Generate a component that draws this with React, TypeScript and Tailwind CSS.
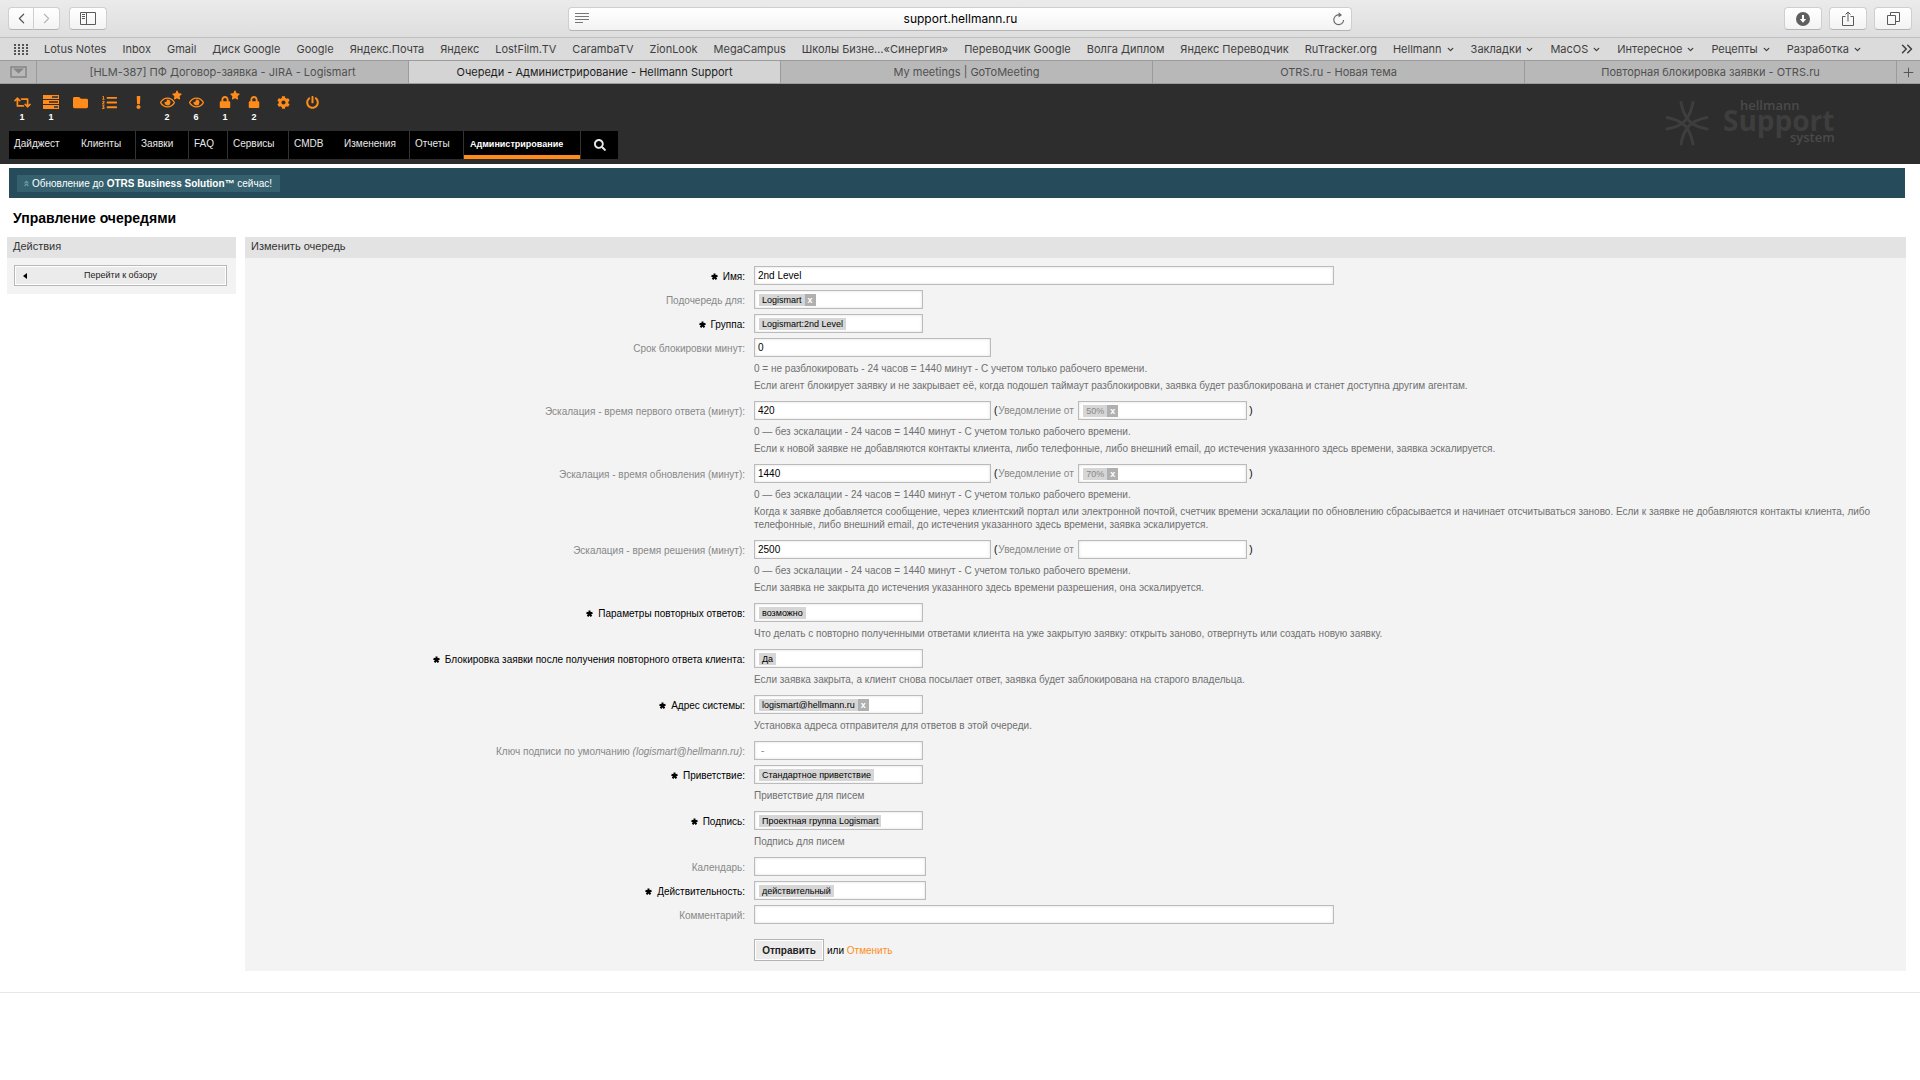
import React from "react";
import { ChevronDown, ChevronLeft, ChevronRight, ChevronsRight, Plus } from "lucide-react";
import {
  FaAngleDoubleUp,
  FaCog,
  FaExclamation,
  FaFolder,
  FaListOl,
  FaLock,
  FaPowerOff,
  FaRegEye,
  FaRetweet,
  FaSearch,
  FaStar,
} from "react-icons/fa";

/* ---------- Browser chrome ---------- */

const chromeButton =
  "flex h-[23px] items-center justify-center rounded border border-[#cfcfcf] border-b-[#b4b4b4] bg-gradient-to-b from-white to-[#f3f3f3] text-[#5a5a5a]";

function Toolbar() {
  return (
    <div className="grid h-[38px] grid-cols-[5fr_7fr_5fr] items-center border-b border-[#c0c0c0] bg-gradient-to-b from-[#ebebeb] to-[#dedede] px-2">
      <div className="flex">
        <button type="button" aria-label="Назад" className={chromeButton + " w-[26px] rounded-r-none"}>
          <ChevronLeft size={17} strokeWidth={1.75} />
        </button>
        <button type="button" aria-label="Вперёд" className={chromeButton + " w-[26px] rounded-l-none border-l-0"}>
          <ChevronRight size={17} strokeWidth={1.5} color="#b5b5b5" />
        </button>
        <button type="button" aria-label="Боковая панель" className={chromeButton + " ml-[9px] w-[38px]"}>
          <svg width="16" height="13" viewBox="0 0 16 13" fill="none" stroke="currentColor">
            <path d="M.5.5h15v12H.5zM6.5.5v12M2 2.5h3M2 4.5h3M2 6.5h3" />
          </svg>
        </button>
      </div>
      <div className="flex h-6 items-center rounded border border-[#cfcfcf] border-b-[#b4b4b4] bg-gradient-to-b from-white to-[#f3f3f3] px-[6px]">
        <svg width="14" height="11" viewBox="0 0 14 11" stroke="#777" aria-hidden="true">
          <path d="M0 .5h14M0 3.5h14M0 6.5h14M0 9.5h8" />
        </svg>
        <input
          aria-label="Адрес"
          defaultValue="support.hellmann.ru"
          className="min-w-0 flex-1 bg-transparent text-center text-xs text-black outline-none"
        />
        <button type="button" aria-label="Обновить" className="text-[#6b6b6b]">
          <svg width="13" height="14" viewBox="0 0 13 14" fill="none" stroke="currentColor" strokeWidth="1.2">
            <path d="M7 2.9A4.9 4.9 0 1 0 11.6 8" />
            <path d="M6.6.2 10 2.9 6.6 5.6z" fill="currentColor" stroke="none" />
          </svg>
        </button>
      </div>
      <div className="flex justify-end gap-[7px]">
        <button type="button" aria-label="Загрузки" className={chromeButton + " w-[38px]"}>
          <svg width="14" height="14" viewBox="0 0 14 14">
            <circle cx="7" cy="7" r="7" fill="#5f5f5f" />
            <path d="M6 3h2v4h2.2L7 10.8 3.8 7H6z" fill="#fff" />
          </svg>
        </button>
        <button type="button" aria-label="Поделиться" className={chromeButton + " w-[38px]"}>
          <svg width="12" height="16" viewBox="0 0 12 16" fill="none" stroke="currentColor">
            <path d="M3.5 5.5h-3v9h11v-9h-3M6 10.500V1M3.500 3.500 6 1l2.500 2.500" />
          </svg>
        </button>
        <button type="button" aria-label="Все вкладки" className={chromeButton + " w-[38px]"}>
          <svg width="13" height="13" viewBox="0 0 13 13" fill="none" stroke="currentColor">
            <path d="M.5 3.500h8v9h-8zM3.500 3.500v-3h9v9h-4" />
          </svg>
        </button>
      </div>
    </div>
  );
}

const bookmarks: { name: string; menu?: boolean }[] = [
  { name: "Lotus Notes" },
  { name: "Inbox" },
  { name: "Gmail" },
  { name: "Диск Google" },
  { name: "Google" },
  { name: "Яндекс.Почта" },
  { name: "Яндекс" },
  { name: "LostFilm.TV" },
  { name: "CarambaTV" },
  { name: "ZionLook" },
  { name: "MegaCampus" },
  { name: "Школы Бизне…«Синергия»" },
  { name: "Переводчик Google" },
  { name: "Волга Диплом" },
  { name: "Яндекс Переводчик" },
  { name: "RuTracker.org" },
  { name: "Hellmann", menu: true },
  { name: "Закладки", menu: true },
  { name: "MacOS", menu: true },
  { name: "Интересное", menu: true },
  { name: "Рецепты", menu: true },
  { name: "Разработка", menu: true },
];

function Bookmarks() {
  return (
    <nav aria-label="Закладки" className="flex h-[22px] items-center gap-4 bg-[#dbdbdb] pr-1 pl-[14px] text-[11px] text-[#3f3f3f]">
      <svg width="14" height="11" viewBox="0 0 14 11" fill="#555" aria-hidden="true">
        {[0, 4, 8, 12].map((x) => [0, 3, 6, 9].map((y) => <rect key={x + "-" + y} x={x} y={y} width="2" height="2" />))}
      </svg>
      {bookmarks.map((b) =>
        b.menu ? (
          <button key={b.name} type="button" className="flex items-center gap-1 whitespace-nowrap">
            {b.name}
            <ChevronDown size={9} strokeWidth={3.5} />
          </button>
        ) : (
          <a key={b.name} href="#" className="whitespace-nowrap">
            {b.name}
          </a>
        ),
      )}
      <button type="button" aria-label="Ещё закладки" className="ml-auto">
        <ChevronsRight size={18} strokeWidth={2} />
      </button>
    </nav>
  );
}

const tabs = [
  "[HLM-387] ПФ Договор-заявка - JIRA - Logismart",
  "Очереди - Администрирование - Hellmann Support",
  "My meetings | GoToMeeting",
  "OTRS.ru - Новая тема",
  "Повторная блокировка заявки - OTRS.ru",
];

function Tabs() {
  return (
    <div className="flex h-6 border-y border-[#9b9b9b] bg-[#b8b8b8] text-[11px] text-[#505050]">
      <button type="button" aria-label="Закреплённая вкладка" className="flex w-[37px] items-center justify-center border-r border-[#9b9b9b]">
        <svg width="17" height="12" viewBox="0 0 17 12" fill="none" stroke="#858585" strokeWidth="1.5">
          <path d="M1 1h15v10H1z" />
          <path d="M3 2.500h11L8.500 7.500z" fill="#858585" stroke="none" />
        </svg>
      </button>
      {tabs.map((t, i) => (
        <button
          key={t}
          type="button"
          className={
            "flex-1 border-r border-[#9b9b9b] " + (i === 1 ? "bg-[#d4d4d4] text-[#1c1c1c]" : "")
          }
        >
          {t}
        </button>
      ))}
      <button type="button" aria-label="Новая вкладка" className="flex w-[23px] items-center justify-center">
        <Plus size={15} strokeWidth={1.5} />
      </button>
    </div>
  );
}

/* ---------- Application header ---------- */

function TasksIcon() {
  return (
    <svg width="16" height="14" viewBox="0 0 16 14" fill="currentColor">
      <path
        fillRule="evenodd"
        d="M0 0h16v4H0zM9 1.300v1.400h6V1.300zM0 5h16v4H0zM6 6.300v1.400h9V6.300zM0 10h16v4H0zM11 11.300v1.400h4v-1.400z"
      />
    </svg>
  );
}

const tools: { label: string; icon: React.ReactNode; count?: number; star?: boolean }[] = [
  { label: "Автоответы", icon: <FaRetweet size={17} />, count: 1 },
  { label: "Задачи", icon: <TasksIcon />, count: 1 },
  { label: "Папка", icon: <FaFolder size={15} /> },
  { label: "Очереди", icon: <FaListOl size={15} /> },
  { label: "Эскалации", icon: <FaExclamation size={13} /> },
  { label: "Новые наблюдаемые", icon: <FaRegEye size={15} />, count: 2, star: true },
  { label: "Наблюдаемые", icon: <FaRegEye size={15} />, count: 6 },
  { label: "Новые заблокированные", icon: <FaLock size={12} />, count: 1, star: true },
  { label: "Заблокированные", icon: <FaLock size={12} />, count: 2 },
  { label: "Настройки", icon: <FaCog size={13} /> },
  { label: "Выход", icon: <FaPowerOff size={13} /> },
];

const navItems: { name: string; className: string }[] = [
  { name: "Дайджест", className: "w-[67px]" },
  { name: "Клиенты", className: "w-[60px] border-r" },
  { name: "Заявки", className: "w-[53px] border-r" },
  { name: "FAQ", className: "w-[39px] border-r" },
  { name: "Сервисы", className: "w-[61px] border-r" },
  { name: "CMDB", className: "w-[50px]" },
  { name: "Изменения", className: "w-[71px] border-r" },
  { name: "Отчеты", className: "w-[54px] border-r" },
];

function Logo() {
  return (
    <svg width="180" height="56" viewBox="0 0 180 56" role="img" aria-label="Hellmann Support System" className="font-['Open_Sans',sans-serif]">
      <g fill="none" stroke="#3e3e3e" strokeWidth="3" strokeLinecap="round">
        <path d="M17 6.500C20 22 26 30 43 33" />
        <path d="M29 6.500C26 22 20 30 3 33" />
        <path d="M17 48C20 32.500 26 24.500 43 21.500" />
        <path d="M29 48C26 32.500 20 24.500 3 21.500" />
      </g>
      <text x="59" y="35" fontSize="28" fontWeight="700" fill="#3e3e3e">
        Support
      </text>
      <text x="76" y="14" fontSize="13" fontWeight="600" fill="#4a4a4a">
        hellmann
      </text>
      <text x="126" y="46" fontSize="13" fontWeight="600" fill="#4a4a4a">
        system
      </text>
    </svg>
  );
}

function Header() {
  return (
    <header className="flex justify-between bg-[#2d2d2d] pr-[76px] pl-[9px]">
      <div className="pb-[5px]">
        <ul className="flex h-[47px] pt-[10px]">
          {tools.map((t) => (
            <li key={t.label} className="w-[29px]">
              <a href="#" aria-label={t.label} className="relative flex w-[26px] flex-col items-center text-[#ff8c1a]">
                <span className="flex h-4 items-center">{t.icon}</span>
                {t.star && <FaStar size={10} className="absolute -top-1 -right-[2px]" />}
                {t.count !== undefined && (
                  <span className="text-[9px] leading-[14px] font-bold text-white">{t.count}</span>
                )}
              </a>
            </li>
          ))}
        </ul>
        <nav aria-label="Главное меню" className="flex h-7 bg-black text-[10px] text-[#e8e8e8]">
          {navItems.map((n) => (
            <a key={n.name} href="#" className={"border-[#333] pt-[5px] pl-[5px] leading-4 " + n.className}>
              {n.name}
            </a>
          ))}
          <a
            href="#"
            aria-current="page"
            className="w-[116px] border-b-4 border-[#ff8c1a] pt-[5px] pl-[6px] text-[9px] leading-4 font-bold text-white"
          >
            Администрирование
          </a>
          <button type="button" aria-label="Поиск" className="flex w-[38px] items-center justify-center border-l border-[#333]">
            <FaSearch size={12} />
          </button>
        </nav>
      </div>
      <div className="pt-3">
        <Logo />
      </div>
    </header>
  );
}

/* ---------- Form ---------- */

const box =
  "h-[19px] border border-[#bbb] bg-white shadow-[inset_0_0_3px_#ddd]";

function TextField({ id, value, wide }: { id: string; value?: string; wide?: boolean }) {
  return (
    <input
      id={id}
      defaultValue={value}
      className={box + " block px-[3px] text-[10px] text-black outline-none " + (wide ? "w-[580px]" : "w-[237px]")}
    />
  );
}

type ChipProps = { id: string; value?: string; removable?: boolean; disabled?: boolean; placeholder?: string; long?: boolean };

function ChipField({ id, value, removable, disabled, placeholder, long }: ChipProps) {
  return (
    <div className={box + " flex items-center pl-1 " + (long ? "w-[172px]" : "w-[169px]")}>
      {value && (
        <span className="flex h-3 shrink-0 items-center bg-[#d6d6d6] text-[9px] leading-3">
          <span className={"px-[3px] " + (disabled ? "text-[#888]" : "text-black")}>{value}</span>
          {removable && (
            <button type="button" aria-label={"Убрать " + value} className="h-3 w-[11px] bg-[#b0b0b0] leading-3 font-bold text-white">
              x
            </button>
          )}
        </span>
      )}
      <input
        id={id}
        placeholder={placeholder}
        className="min-w-0 flex-1 bg-transparent pl-[2px] text-[10px] outline-none placeholder:text-[#888]"
      />
    </div>
  );
}

function Marker() {
  return (
    <svg width="7" height="7" viewBox="0 0 7 7" stroke="#000" strokeWidth="2" aria-hidden="true" className="mr-[5px]">
      <path d="M3.500 3.700V.5M3.500 3.700 .5 2.700M3.500 3.700 6.500 2.700M3.500 3.700 1.600 6.300M3.500 3.700 5.400 6.300" />
    </svg>
  );
}

type RowProps = {
  id: string;
  label: React.ReactNode;
  required?: boolean;
  hints?: string[];
  children: React.ReactNode;
};

function Row({ id, label, required, hints, children }: RowProps) {
  return (
    <div className="mb-[5px] grid grid-cols-[500px_1fr] gap-x-[9px]">
      <label
        htmlFor={id}
        className={"flex h-[19px] items-center justify-end pt-px whitespace-pre " + (required ? "text-black" : "text-[#888]")}
      >
        {required && <Marker />}
        {label}
      </label>
      <div>
        {children}
        {hints && (
          <div className="mt-[5px] mb-1 flex flex-col gap-1 leading-[13px] text-[#707070]">
            {hints.map((h) => (
              <p key={h}>{h}</p>
            ))}
          </div>
        )}
      </div>
    </div>
  );
}

function Escalation({ id, value, notify }: { id: string; value: string; notify?: string }) {
  return (
    <div className="flex items-center">
      <TextField id={id} value={value} />
      <span className="ml-[3px] text-black">(</span>
      <label htmlFor={id + "-notify"} className="ml-px w-20 text-[#888]">
        Уведомление от
      </label>
      <ChipField id={id + "-notify"} value={notify} removable disabled />
      <span className="ml-[2px] text-black">)</span>
    </div>
  );
}

const noEscalation = "0 — без эскалации - 24 часов = 1440 минут - С учетом только рабочего времени.";

function QueueForm() {
  return (
    <form className="bg-[#f3f3f3] pt-2 pr-[10px] pb-[10px] text-[10px]" onSubmit={(e) => e.preventDefault()}>
      <Row id="name" label="Имя:" required>
        <TextField id="name" value="2nd Level" wide />
      </Row>
      <Row id="parent" label="Подочередь для:">
        <ChipField id="parent" value="Logismart" removable />
      </Row>
      <Row id="group" label="Группа:" required>
        <ChipField id="group" value="Logismart:2nd Level" />
      </Row>
      <Row
        id="unlock"
        label="Срок блокировки минут:"
        hints={[
          "0 = не разблокировать - 24 часов = 1440 минут - С учетом только рабочего времени.",
          "Если агент блокирует заявку и не закрывает её, когда подошел таймаут разблокировки, заявка будет разблокирована и станет доступна другим агентам.",
        ]}
      >
        <TextField id="unlock" value="0" />
      </Row>
      <Row
        id="first"
        label="Эскалация - время первого ответа (минут):"
        hints={[
          noEscalation,
          "Если к новой заявке не добавляются контакты клиента, либо телефонные, либо внешний email, до истечения указанного здесь времени, заявка эскалируется.",
        ]}
      >
        <Escalation id="first" value="420" notify="50%" />
      </Row>
      <Row
        id="update"
        label="Эскалация - время обновления (минут):"
        hints={[
          noEscalation,
          "Когда к заявке добавляется сообщение, через клиентский портал или электронной почтой, счетчик времени эскалации по обновлению сбрасывается и начинает отсчитываться заново. Если к заявке не добавляются контакты клиента, либо телефонные, либо внешний email, до истечения указанного здесь времени, заявка эскалируется.",
        ]}
      >
        <Escalation id="update" value="1440" notify="70%" />
      </Row>
      <Row
        id="solution"
        label="Эскалация - время решения (минут):"
        hints={[noEscalation, "Если заявка не закрыта до истечения указанного здесь времени разрешения, она эскалируется."]}
      >
        <Escalation id="solution" value="2500" />
      </Row>
      <Row
        id="followup"
        label="Параметры повторных ответов:"
        required
        hints={[
          "Что делать с повторно полученными ответами клиента на уже закрытую заявку: открыть заново, отвергнуть или создать новую заявку.",
        ]}
      >
        <ChipField id="followup" value="возможно" />
      </Row>
      <Row
        id="lock"
        label="Блокировка заявки после получения повторного ответа клиента:"
        required
        hints={["Если заявка закрыта, а клиент снова посылает ответ, заявка будет заблокирована на старого владельца."]}
      >
        <ChipField id="lock" value="Да" />
      </Row>
      <Row id="address" label="Адрес системы:" required hints={["Установка адреса отправителя для ответов в этой очереди."]}>
        <ChipField id="address" value="logismart@hellmann.ru" removable />
      </Row>
      <Row
        id="key"
        label={
          <>
            Ключ подписи по умолчанию <em>(logismart@hellmann.ru)</em>:
          </>
        }
      >
        <ChipField id="key" placeholder="-" />
      </Row>
      <Row id="salutation" label="Приветствие:" required hints={["Приветствие для писем"]}>
        <ChipField id="salutation" value="Стандартное приветствие" />
      </Row>
      <Row id="signature" label="Подпись:" required hints={["Подпись для писем"]}>
        <ChipField id="signature" value="Проектная группа Logismart" />
      </Row>
      <Row id="calendar" label="Календарь:">
        <ChipField id="calendar" long />
      </Row>
      <Row id="valid" label="Действительность:" required>
        <ChipField id="valid" value="действительный" long />
      </Row>
      <Row id="comment" label="Комментарий:">
        <TextField id="comment" wide />
      </Row>
      <div className="ml-[509px] flex items-center gap-[3px] pt-[10px] text-black">
        <button
          type="submit"
          className="h-[22px] w-[70px] border border-[#b4b4b4] bg-[#ebebeb] font-bold text-[#222] shadow-[inset_0_0_0_1px_#fff]"
        >
          Отправить
        </button>
        <span>
          или{" "}
          <a href="#" className="text-[#ff8c1a]">
            Отменить
          </a>
        </span>
      </div>
    </form>
  );
}

const widgetTitle = "h-[21px] bg-[#e3e3e3] text-[11px] leading-[19px] text-[#333]";

export default function App() {
  return (
    <div className="min-h-screen bg-white font-['Liberation_Sans',sans-serif]">
      <div className="font-['Inter',sans-serif]">
        <Toolbar />
        <Bookmarks />
        <Tabs />
      </div>
      <Header />
      <div className="mt-1 mr-[15px] ml-[9px] flex h-[30px] items-center bg-[#264b5b] pl-2 text-[10px]">
        <a href="#" className="flex h-[17px] items-center gap-[2px] bg-[#35616f] pr-2 pl-[6px] text-white">
          <FaAngleDoubleUp size={7} color="#6fa3b0" />
          <span>
            Обновление до <b>OTRS Business Solution™</b> сейчас!
          </span>
        </a>
      </div>
      <h1 className="flex h-[39px] items-center pl-[13px] text-sm font-bold text-black">Управление очередями</h1>
      <div className="mr-[14px] ml-[7px] flex items-start gap-[9px]">
        <aside className="w-[229px] bg-[#f3f3f3] pb-2">
          <h2 className={widgetTitle + " pl-[6px]"}>Действия</h2>
          <a
            href="#"
            className="mt-[7px] mr-[9px] ml-[7px] flex h-[21px] items-center border border-[#b8b8b8] bg-[#ebebeb] px-2 text-[9px] text-[#222] shadow-[inset_0_0_0_1px_#fff]"
          >
            <svg width="4" height="6" viewBox="0 0 4 6" aria-hidden="true">
              <path d="M4 0v6L0 3z" />
            </svg>
            <span className="flex-1 pr-1 text-center">Перейти к обзору</span>
          </a>
        </aside>
        <main className="min-w-0 flex-1">
          <h2 className={widgetTitle + " pl-[6px]"}>Изменить очередь</h2>
          <QueueForm />
        </main>
      </div>
      <footer className="mt-[21px] border-t border-[#e8e8e8]" />
    </div>
  );
}
